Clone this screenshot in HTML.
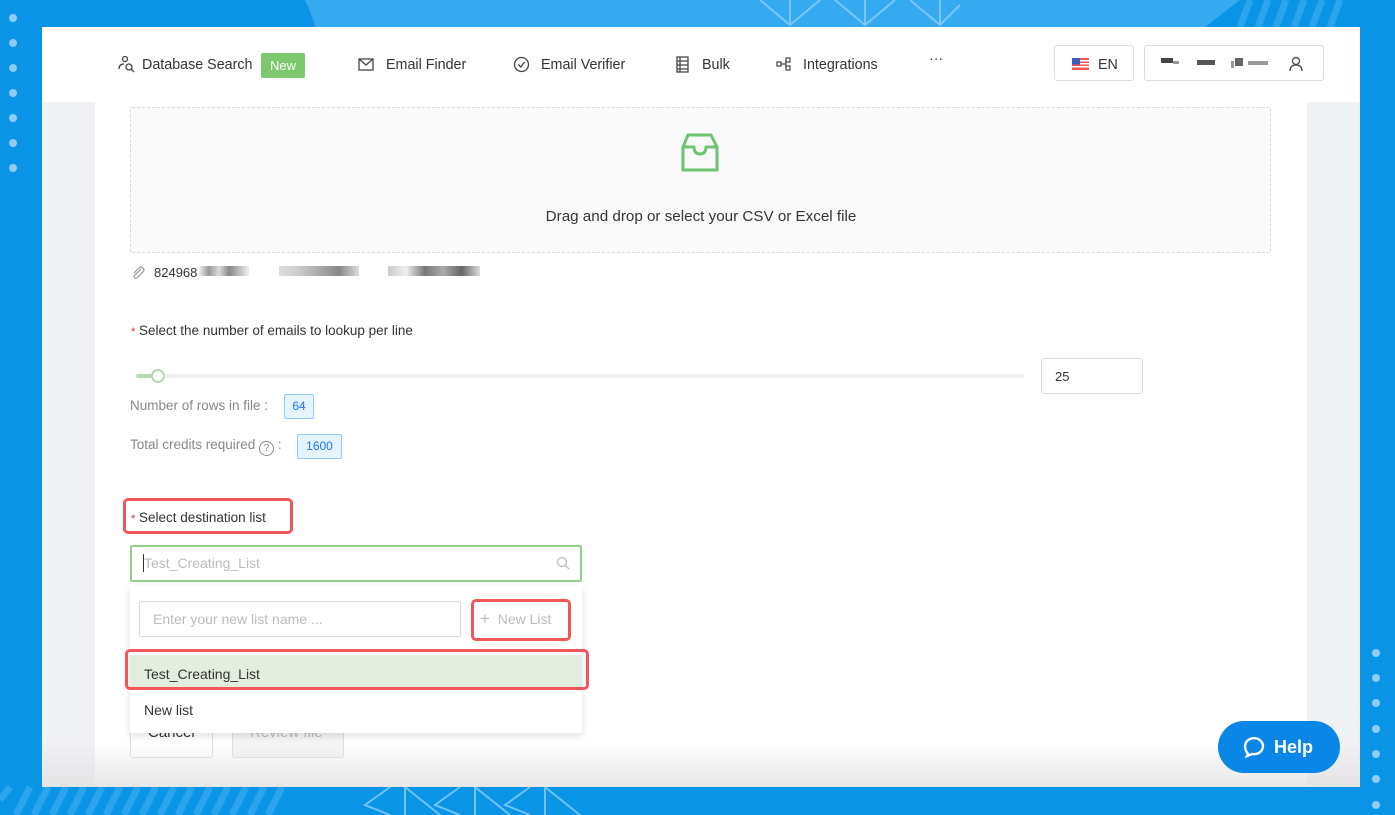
<!DOCTYPE html>
<html><head><meta charset="utf-8"><style>
*{box-sizing:border-box;margin:0;padding:0}
body{width:1395px;height:815px;overflow:hidden;background:#0a94e6;font-family:"Liberation Sans",sans-serif;position:relative;color:#333}
.abs{position:absolute}
.dot{position:absolute;width:8px;height:8px;border-radius:50%;background:#8dcdf7}
.win{left:42px;top:27px;width:1318px;height:760px;background:#fff;overflow:hidden}
.side{top:75px;background:#f0f1f5;height:700px}
.nav{font-size:14.3px;color:#333;top:30px}
.t{position:absolute;white-space:nowrap}
.btn{position:absolute;border:1px solid #ddd;border-radius:3px;background:#fff}
.badge{position:absolute;border:1px solid #91caff;background:#e6f4ff;color:#1677ff;font-size:12px;border-radius:2px;text-align:center;line-height:22px}
.red{position:absolute;border:3px solid #f0565a;border-radius:5px}
</style></head><body>
<svg class="abs" style="left:0;top:0" width="1395" height="815">
<path d="M305 0 Q312 14 315 27 L1205 27 L1240 0Z" fill="#35aaf0"/>
<g stroke="#8dcdf7" stroke-width="2" fill="none" opacity=".8">
<path d="M760 0 L790 25 L820 0 M790 0 V25 M835 0 L865 25 L895 0 M865 0 V25 M910 0 L940 25 L960 5 M940 0V25"/>
<path d="M390 787 L365 805 L390 815 M405 787 V815 M405 787 L440 815 M460 787 L435 805 L460 815 M475 787V815 M475 787 L510 815 M530 787 L505 805 L530 815 M545 787V815 M545 787 L580 815"/>
</g>
<g stroke="#3fb0f3" stroke-width="7" opacity=".6">
<path d="M0 800 L10 787 M16 815 L30 787 M34 815 L48 787 M52 815 L66 787 M70 815 L84 787 M88 815 L102 787 M106 815 L120 787 M124 815 L138 787 M142 815 L156 787 M160 815 L174 787 M178 815 L192 787 M196 815 L210 787 M214 815 L228 787 M232 815 L246 787 M250 815 L264 787 M268 815 L282 787"/>
<path d="M1240 27 L1250 0 M1258 27 L1268 0 M1276 27 L1286 0 M1294 27 L1304 0 M1312 27 L1322 0 M1330 27 L1340 0"/>
</g>
</svg>
<div class="dot" style="left:9px;top:14px"></div><div class="dot" style="left:9px;top:39px"></div><div class="dot" style="left:9px;top:64px"></div><div class="dot" style="left:9px;top:89px"></div><div class="dot" style="left:9px;top:114px"></div><div class="dot" style="left:9px;top:139px"></div><div class="dot" style="left:9px;top:164px"></div>
<div class="dot" style="left:1372px;top:649px"></div><div class="dot" style="left:1372px;top:674px"></div><div class="dot" style="left:1372px;top:699px"></div><div class="dot" style="left:1372px;top:725px"></div><div class="dot" style="left:1372px;top:750px"></div><div class="dot" style="left:1372px;top:775px"></div><div class="dot" style="left:1372px;top:801px"></div>

<div class="abs win">
 <div class="abs side" style="left:0;width:53px"></div>
 <div class="abs side" style="left:1265px;width:53px"></div>
 <svg class="abs" style="left:76px;top:28px" width="18" height="18" fill="none" stroke="#444" stroke-width="1.3"><circle cx="7" cy="4" r="2.5"/><path d="M1 14 Q1 9 6 9"/><circle cx="11" cy="12" r="3"/><path d="M13 14 L16 17"/></svg>
 <div class="t nav" style="left:100px">Database Search</div>
 <div class="abs" style="left:219px;top:26px;width:44px;height:25px;background:#7ec96e;border-radius:2px;color:#fff;font-size:13px;text-align:center;line-height:25px">New</div>
 <svg class="abs" style="left:316px;top:31px" width="16" height="14" fill="none" stroke="#444" stroke-width="1.3"><rect x="1" y="1" width="14" height="11"/><path d="M1 1 L8 7 L15 1"/></svg>
 <div class="t nav" style="left:344px">Email Finder</div>
 <svg class="abs" style="left:471px;top:29px" width="17" height="17" fill="none" stroke="#444" stroke-width="1.3"><circle cx="8.5" cy="8.5" r="7"/><path d="M5.5 8.5 L7.8 11 L11.5 6"/></svg>
 <div class="t nav" style="left:499px">Email Verifier</div>
 <svg class="abs" style="left:634px;top:29px" width="13" height="17" fill="none" stroke="#444" stroke-width="1.3"><rect x="1" y="1" width="11" height="15"/><path d="M1 5H12M1 9H12M1 13H12M4 1V16"/></svg>
 <div class="t nav" style="left:660px">Bulk</div>
 <svg class="abs" style="left:734px;top:30px" width="16" height="15" fill="none" stroke="#444" stroke-width="1.2"><rect x="1" y="5" width="4" height="4"/><rect x="10" y="1" width="4" height="4"/><rect x="10" y="9" width="4" height="4"/><path d="M5 7H10M10 3V11"/></svg>
 <div class="t nav" style="left:761px">Integrations</div>
 <div class="t nav" style="left:887px;top:24px">···</div>
 <div class="btn" style="left:1012px;top:18px;width:80px;height:36px"></div>
 <svg class="abs" style="left:1030px;top:31px" width="17" height="12"><rect width="17" height="12" fill="#e55"/><rect y="2" width="17" height="1.5" fill="#fff"/><rect y="5" width="17" height="1.5" fill="#fff"/><rect y="8" width="17" height="1.5" fill="#fff"/><rect width="8" height="6.5" fill="#3a5bb8"/></svg>
 <div class="t nav" style="left:1056px">EN</div>
 <div class="btn" style="left:1102px;top:18px;width:180px;height:36px"></div>
 <div class="abs" style="left:1119px;top:31px;width:12px;height:5px;background:#444"></div>
 <div class="abs" style="left:1131px;top:34px;width:6px;height:3px;background:#999"></div>
 <div class="abs" style="left:1155px;top:33px;width:18px;height:5px;background:#555"></div>
 <div class="abs" style="left:1189px;top:34px;width:3px;height:7px;background:#999"></div>
 <div class="abs" style="left:1193px;top:31px;width:8px;height:8px;background:#666"></div>
 <div class="abs" style="left:1206px;top:34px;width:20px;height:4px;background:#999"></div>
 <svg class="abs" style="left:1247px;top:29px" width="14" height="16" fill="none" stroke="#444" stroke-width="1.3"><circle cx="7" cy="5" r="3.5"/><path d="M1 15 Q1 9 7 9 Q13 9 13 15"/></svg>

 <div class="abs" style="left:88px;top:80px;width:1141px;height:146px;border:1px dashed #d9d9d9;background:#fafafa;border-radius:2px"></div>
 <svg class="abs" style="left:638px;top:106px" width="40" height="40" fill="none" stroke="#6cc46f" stroke-width="3" stroke-linejoin="round"><path d="M8 2 H31 L37 14 V37 H3 V14 Z M3 14 H14 Q14 21 20 21 Q26 21 26 14 H37"/></svg>
 <div class="t" style="left:0;width:1318px;text-align:center;top:181px;font-size:15.2px;color:#333">Drag and drop or select your CSV or Excel file</div>
 <svg class="abs" style="left:89px;top:239px" width="14" height="14" fill="none" stroke="#999" stroke-width="1.2"><path d="M10 3 L4 9 Q2 11 4 12 Q5 13 7 11 L12 6 Q14 3 12 2 Q10 0 8 2 L3 7"/></svg>
 <div class="t" style="left:112px;top:238px;font-size:13px">824968</div>
 <div class="abs" style="left:157px;top:239px;width:50px;height:10px;background:linear-gradient(90deg,#eee,#999 20%,#ddd 40%,#888 60%,#eee)"></div>
 <div class="abs" style="left:237px;top:239px;width:80px;height:10px;background:linear-gradient(90deg,#ddd,#ccc,#aaa,#888,#ddd)"></div>
 <div class="abs" style="left:346px;top:239px;width:92px;height:10px;background:linear-gradient(90deg,#ccc,#eee,#777,#aaa,#666,#ddd)"></div>

 <div class="t" style="left:89px;top:296px;font-size:13.5px"><span style="color:#f5222d;font-size:11px">*</span> Select the number of emails to lookup per line</div>
 <div class="abs" style="left:94px;top:347px;width:888px;height:4px;background:#f0f0f0;border-radius:2px"></div>
 <div class="abs" style="left:94px;top:347px;width:22px;height:4px;background:#b7d7b4;border-radius:2px"></div>
 <div class="abs" style="left:109px;top:342px;width:14px;height:14px;border-radius:50%;border:2px solid #b7d7b4;background:#fff"></div>
 <div class="btn" style="left:999px;top:331px;width:102px;height:36px;border-color:#d9d9d9"></div>
 <div class="t" style="left:1013px;top:342px;font-size:13px">25</div>
 <div class="t" style="left:88px;top:371px;font-size:13.5px;color:#888">Number of rows in file :</div>
 <div class="badge" style="left:242px;top:367px;width:30px;height:25px">64</div>
 <div class="t" style="left:88px;top:410px;font-size:13.5px;color:#888">Total credits required <span style="display:inline-block;width:15px;height:15px;border:1px solid #888;border-radius:50%;font-size:10px;text-align:center;line-height:13px;vertical-align:-2px">?</span> :</div>
 <div class="badge" style="left:255px;top:407px;width:45px;height:25px">1600</div>

 <div class="t" style="left:89px;top:483px;font-size:13.5px"><span style="color:#f5222d;font-size:11px">*</span> Select destination list</div>
 <div class="red" style="left:81px;top:471px;width:170px;height:36px"></div>
 <div class="abs" style="left:88px;top:518px;width:452px;height:37px;border:2px solid #92d08a;border-radius:2px"></div>
 <div class="abs" style="left:101px;top:527px;width:1px;height:18px;background:#333"></div>
 <div class="t" style="left:102px;top:528px;font-size:14px;color:#bbb">Test_Creating_List</div>
 <svg class="abs" style="left:514px;top:529px" width="14" height="14" fill="none" stroke="#bbb" stroke-width="1.3"><circle cx="6" cy="6" r="4.5"/><path d="M9.5 9.5 L13 13"/></svg>

 <div class="btn" style="left:88px;top:680px;width:83px;height:51px"></div>
 <div class="t" style="left:106px;top:697px;font-size:15px">Cancel</div>
 <div class="btn" style="left:190px;top:680px;width:112px;height:51px;background:#f5f5f5"></div>
 <div class="t" style="left:208px;top:697px;font-size:15px;color:#bbb">Review file</div>
 <div class="abs" style="left:88px;top:559px;width:452px;height:147px;background:#fff;box-shadow:0 3px 8px rgba(0,0,0,.12)"></div>
 <div class="abs" style="left:97px;top:574px;width:322px;height:36px;border:1px solid #d9d9d9;border-radius:2px"></div>
 <div class="t" style="left:111px;top:584px;font-size:14px;color:#bbb">Enter your new list name ...</div>
 <div class="t" style="left:438px;top:582px;font-size:14px;color:#bbb"><span style="font-size:17px">+</span>&nbsp; New List</div>
 <div class="red" style="left:429px;top:572px;width:100px;height:42px"></div>
 <div class="abs" style="left:88px;top:628px;width:452px;height:34px;background:#e3eedf"></div>
 <div class="t" style="left:102px;top:639px;font-size:14px">Test_Creating_List</div>
 <div class="red" style="left:83px;top:622px;width:464px;height:41px"></div>
 <div class="t" style="left:102px;top:675px;font-size:14px">New list</div>
 <div class="abs" style="left:0;top:715px;width:1318px;height:45px;background:linear-gradient(rgba(255,255,255,0),rgba(225,225,225,.8))"></div>
</div>
<div class="abs" style="left:1218px;top:721px;width:122px;height:52px;border-radius:26px;background:#0a86e6;color:#fff;font-weight:bold;font-size:18px;line-height:52px;padding-left:56px">Help</div>
<svg class="abs" style="left:1242px;top:735px" width="24" height="24" fill="none" stroke="#fff" stroke-width="2.4"><path d="M6 19 Q3 15 3 11 A9 8 0 1 1 10 19 L5 21 Z"/></svg>
</body></html>
